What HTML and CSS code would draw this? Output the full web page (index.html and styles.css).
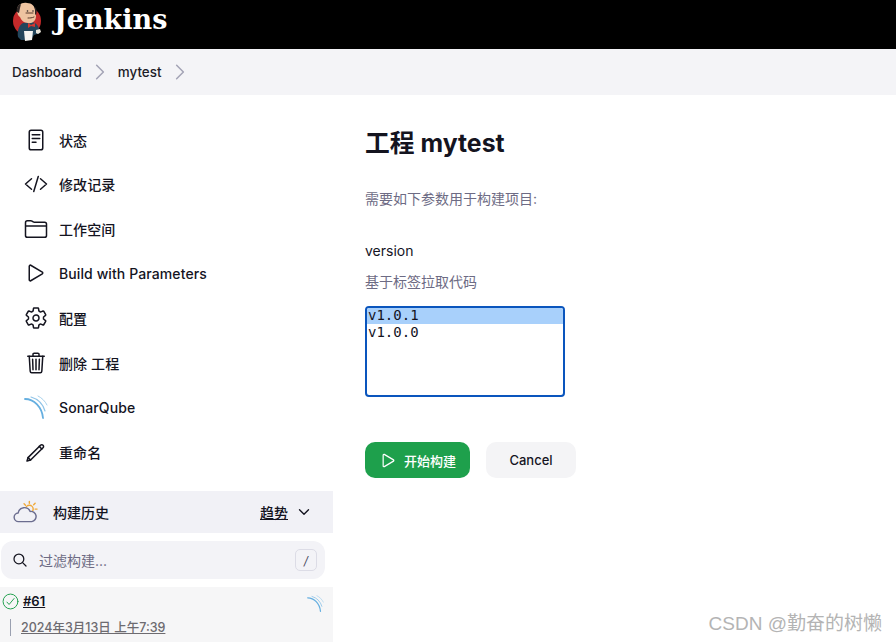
FILE: index.html
```html
<!DOCTYPE html>
<html lang="zh">
<head>
<meta charset="utf-8">
<title>mytest - Jenkins</title>
<link rel="stylesheet" href="styles.css">
</head>
<body>
<header class="topbar">
  <svg class="logo" viewBox="0 0 30 40" width="30" height="40" aria-hidden="true">
    <circle cx="15" cy="20" r="14" fill="#c42a2a"/>
    <path d="M6 36c-1-6 1-12 5-14l9-1c4 1 6 3 7 7l1 4-6 2-3 5H9z" fill="#24465c"/>
    <path d="M5 9c0-5 5-8 10-7 5 0 8 3 8 8l1 5c0 5-4 8-8 7-4 0-7-3-8-6-2-1-3-4-3-7z" fill="#eec3a0"/>
    <path d="M5 11c-1-4 1-7 4-8l-1 4-1 5zM23 6c2 2 2 5 1 8l-1-1z" fill="#2b2423"/>
    <path d="M14 12h7M16 17c2 0 4 0 6-1" stroke="#59392b" stroke-width="1" fill="none"/>
    <circle cx="15.5" cy="10" r=".8" fill="#2b2423"/><circle cx="21" cy="10" r=".8" fill="#2b2423"/>
    <path d="M16 22l3 2 4-2v4l-4-1-3 2z" fill="#d8362f"/>
    <path d="M12 30h9l-1 9-7 1z" fill="#f6f5f2"/>
    <path d="M24 29l4-1 1 3-3 2-2-1z" fill="#e8e3d8"/>
  </svg>
  <span class="brand">Jenkins</span>
</header>
<nav class="crumbs">
  <span>Dashboard</span>
  <svg class="crumb-sep" viewBox="0 0 512 512"><path d="M184 112l144 144-144 144"/></svg>
  <span>mytest</span>
  <svg class="crumb-sep" viewBox="0 0 512 512"><path d="M184 112l144 144-144 144"/></svg>
</nav>
<div class="layout">
  <aside class="sidebar">
    <ul class="tasks">
      <li class="task"><svg class="icon" viewBox="0 0 512 512"><rect x="112" y="48" width="288" height="416" rx="40"/><path d="M176 144h160M176 224h160M176 304h80"/></svg><span>状态</span></li>
      <li class="task"><svg class="icon" viewBox="0 0 512 512"><path d="M160 368L32 256l128-112M352 368l128-112-128-112M304 96l-96 320"/></svg><span>修改记录</span></li>
      <li class="task"><svg class="icon" viewBox="0 0 512 512"><path d="M440 432H72a40 40 0 01-40-40V120a40 40 0 0140-40h75.89a40 40 0 0122.19 6.72l27.84 18.56a40 40 0 0022.19 6.72H440a40 40 0 0140 40v240a40 40 0 01-40 40zM32 192h448"/></svg><span>工作空间</span></li>
      <li class="task"><svg class="icon" viewBox="0 0 512 512"><path d="M112 111v290c0 17.44 17 28.52 31 20.16l247.9-148.37c12.12-7.25 12.12-26.33 0-33.58L143 90.84c-14-8.36-31 2.72-31 20.16z"/></svg><span>Build with Parameters</span></li>
      <li class="task"><svg class="icon" viewBox="0 0 512 512"><path d="M262.29 192.31a64 64 0 1057.4 57.4 64.13 64.13 0 00-57.4-57.4zM416.39 256a154.34 154.34 0 01-1.53 20.79l45.21 35.46a10.81 10.81 0 012.45 13.75l-42.77 74a10.81 10.81 0 01-13.14 4.59l-44.9-18.08a16.11 16.11 0 00-15.17 1.75A164.48 164.48 0 01325 400.8a15.94 15.94 0 00-8.82 12.14l-6.73 47.89a11.08 11.08 0 01-10.68 9.17h-85.54a11.11 11.11 0 01-10.69-8.87l-6.72-47.82a16.07 16.07 0 00-9-12.22 155.3 155.3 0 01-21.46-12.57 16 16 0 00-15.11-1.71l-44.89 18.07a10.81 10.81 0 01-13.14-4.58l-42.77-74a10.8 10.8 0 012.45-13.75l38.21-30a16.05 16.05 0 006-14.08c-.36-4.17-.58-8.33-.58-12.5s.21-8.27.58-12.35a16 16 0 00-6.07-13.94l-38.19-30A10.81 10.81 0 0149.48 186l42.77-74a10.81 10.81 0 0113.14-4.59l44.9 18.08a16.11 16.11 0 0015.17-1.75A164.48 164.48 0 01187 111.2a15.94 15.94 0 008.82-12.14l6.73-47.89A11.08 11.08 0 01213.23 42h85.54a11.11 11.11 0 0110.69 8.87l6.72 47.82a16.07 16.07 0 009 12.22 155.3 155.3 0 0121.46 12.57 16 16 0 0015.11 1.71l44.89-18.07a10.81 10.81 0 0113.14 4.58l42.77 74a10.8 10.8 0 01-2.45 13.75l-38.21 30a16.05 16.05 0 00-6.05 14.08c.33 4.14.55 8.3.55 12.47z"/></svg><span>配置</span></li>
      <li class="task"><svg class="icon" viewBox="0 0 512 512"><path d="M112 112l20 320c.95 18.49 14.4 32 32 32h184c17.67 0 30.87-13.51 32-32l20-320"/><path d="M80 112h352"/><path d="M192 112V72h0a23.93 23.93 0 0124-24h80a23.93 23.93 0 0124 24h0v40M256 176v224M184 176l8 224M328 176l-8 224"/></svg><span>删除 工程</span></li>
      <li class="task"><svg class="icon sonar" viewBox="0 0 24 24"><path class="arc-a" d="M1 4c9 0 17 8 18 19"/><path class="arc-b" d="M7 2c7 2 12 7 14 14"/><path class="arc-c" d="M14 1c4 2 7 5 9 9"/></svg><span>SonarQube</span></li>
      <li class="task"><svg class="icon" viewBox="0 0 512 512"><path d="M64 448l22-72L352 110a38 38 0 0154 54L140 428z"/><path d="M326 136l54 54M86 376l54 52"/></svg><span>重命名</span></li>
    </ul>
    <div class="history-head">
      <svg class="weather" viewBox="0 0 26 24"><g class="sun"><circle cx="17" cy="9" r="4"/><path d="M17 1v2M23 3l-1.500 1.500M25 9h-2M11.500 3.500L13 5"/></g><path class="cloud" d="M6 22a4.500 4.500 0 01-.6-9 6.500 6.500 0 0112.400-1.600A5.300 5.300 0 0119.500 22z"/></svg>
      <strong class="history-title">构建历史</strong>
      <span class="trend">趋势</span>
      <svg class="chev" viewBox="0 0 512 512"><path d="M112 184l144 144 144-144"/></svg>
    </div>
    <div class="filter">
      <svg class="search" viewBox="0 0 512 512"><path d="M221.09 64a157.09 157.09 0 10157.09 157.09A157.1 157.1 0 00221.09 64z"/><path d="M338.29 338.29L448 448"/></svg>
      <span class="filter-text">过滤构建...</span>
      <kbd class="key">/</kbd>
    </div>
    <div class="build">
      <div class="build-top">
        <svg class="ok" viewBox="0 0 512 512"><circle cx="256" cy="256" r="200"/><path d="M352 176L217.600 336 160 272"/></svg>
        <span class="build-no">#61</span>
        <svg class="sonar small" viewBox="0 0 24 24"><path class="arc-a" d="M1 4c9 0 17 8 18 19"/><path class="arc-b" d="M7 2c7 2 12 7 14 14"/><path class="arc-c" d="M14 1c4 2 7 5 9 9"/></svg>
      </div>
      <div class="build-date"><span>2024年3月13日 上午7:39</span></div>
    </div>
  </aside>
  <main class="main">
    <h1 class="title">工程 mytest</h1>
    <p class="lead">需要如下参数用于构建项目:</p>
    <div class="param-name">version</div>
    <div class="param-desc">基于标签拉取代码</div>
    <div class="listbox" role="listbox">
      <div class="opt selected">v1.0.1</div>
      <div class="opt">v1.0.0</div>
    </div>
    <div class="actions">
      <button class="btn primary"><svg class="btn-icon" viewBox="0 0 512 512"><path d="M112 111v290c0 17.44 17 28.52 31 20.16l247.9-148.37c12.12-7.25 12.12-26.33 0-33.58L143 90.84c-14-8.36-31 2.72-31 20.16z"/></svg>开始构建</button>
      <button class="btn secondary">Cancel</button>
    </div>
  </main>
</div>
<div class="watermark">CSDN @勤奋的树懒</div>
</body>
</html>
```
FILE: styles.css
```css
* { box-sizing: border-box; }
html, body { margin: 0; height: 642px; overflow: hidden; }
body {
  font-family: Inter, "Noto Sans CJK SC", sans-serif;
  font-size: 14px;
  color: #14141f;
  background: #fff;
  position: relative;
}
svg { fill: none; stroke: currentColor; stroke-linecap: round; stroke-linejoin: round; stroke-width: 32; flex: none; }

.topbar { height: 49px; background: #000; display: flex; align-items: flex-start; padding: 0 0 0 12px; }
.logo { stroke: none; stroke-width: 0; margin-top: 1px; }
.logo path[stroke] { stroke-width: 1; }
.brand { font-family: "DejaVu Serif", serif; font-weight: 700; font-size: 27px; line-height: 40px; color: #fff; margin-left: 12px; }

.crumbs { height: 46px; background: #f4f4f7; display: flex; align-items: center; padding-left: 12px; font-size: 13.4px; font-weight: 450; color: #1c1c28; }
.crumb-sep { width: 24px; height: 24px; color: #a3a3b5; margin: 0 6px 0 6px; }

.layout { display: flex; height: 547px; }
.sidebar { width: 333px; flex: none; }
.tasks { list-style: none; margin: 0; padding: 22.3px 0 0 24px; height: 396px; }
.task { height: 44.6px; display: flex; align-items: center; gap: 11px; font-weight: 450; letter-spacing: .1px; }
.icon { width: 24px; height: 24px; }
.sonar { stroke-width: 1.4; color: #65afe0; }
.arc-a { stroke: #65afe0; stroke-width: 1.800; }
.arc-b { stroke: #8fc4e8; stroke-width: 1.200; }
.arc-c { stroke: #a9d2ec; stroke-width: 1; }

.history-head { height: 42px; background: #f1f1f6; display: flex; align-items: center; padding: 0 21px 0 13px; }
.weather { width: 25px; height: 24px; stroke-width: 1.500; }
.sun { stroke: #f0a93a; }
.cloud { stroke: #6b6d8f; fill: #f1f1f6; }
.history-title { font-weight: 500; margin-left: 15px; flex: 1; }
.trend { font-weight: 500; text-decoration: underline; margin-right: -1px; }
.chev { width: 16px; height: 16px; margin-left: 9px; stroke-width: 44; }

.filter { margin: 8px 8px 0 1px; height: 38px; border-radius: 12px; background: #f3f3f7; display: flex; align-items: center; padding: 0 8px 0 11px; }
.search { width: 16px; height: 16px; stroke-width: 40; }
.filter-text { flex: 1; margin-left: 11px; color: #6d6b84; }
.key { width: 22px; height: 22px; border: 1px solid #dcdce6; border-radius: 5px; display: flex; align-items: center; justify-content: center; font-family: Inter, sans-serif; font-size: 12px; font-style: italic; color: #4a4a5e; }

.build { margin-top: 8px; height: 55px; background: #f6f6f7; padding: 5px 9px 0 1px; }
.build-top { display: flex; align-items: center; height: 18px; }
.ok { width: 19px; height: 19px; color: #1ea04c; stroke-width: 26; }
.build-no { flex: 1; margin-left: 3px; font-size: 13px; font-weight: 600; text-decoration: underline; }
.small { width: 17px; height: 17px; margin-top: 4px; }
.build-date { margin: 9px 0 0 9px; padding-left: 10px; border-left: 1px solid #9aa0b0; height: 17px; line-height: 17px; font-size: 12.5px; color: #6d6b70; font-weight: 450; text-decoration: underline; }

.main { flex: 1; padding-left: 32px; }
.title { margin: 30px 0 0; font-size: 24.8px; line-height: 36px; font-weight: 700; color: #14141f; }
.lead { margin: 28px 0 0; line-height: 20px; color: #6d6b84; }
.param-name { margin-top: 32px; line-height: 20px; font-weight: 400; }
.param-desc { margin-top: 11px; line-height: 20px; color: #6d6b84; }
.listbox { margin-top: 14px; width: 200px; height: 91px; border: 2px solid #0a55bd; border-radius: 4px; font-family: "DejaVu Sans Mono", monospace; font-size: 14px; line-height: 16px; color: #14141f; overflow: hidden; }
.opt { padding-left: 1px; height: 16px; }
.selected { background: #a8d0fb; line-height: 15px; }

.actions { display: flex; gap: 16px; margin-top: 45px; }
.btn { height: 36px; border: 0; border-radius: 10px; font-family: inherit; font-size: 13px; font-weight: 450; display: flex; align-items: center; justify-content: center; }
.primary { width: 105px; background: #1ea04c; color: #fff; gap: 6px; }
.secondary { width: 90px; background: #f4f4f6; color: #14141f; }
.btn-icon { width: 19px; height: 19px; }

.watermark { position: absolute; right: 14px; bottom: 6px; font-size: 19px; line-height: 24px; color: #b4b4b4; font-family: "Liberation Sans", "Noto Sans CJK SC", sans-serif; font-weight: 400; white-space: nowrap; }
```
